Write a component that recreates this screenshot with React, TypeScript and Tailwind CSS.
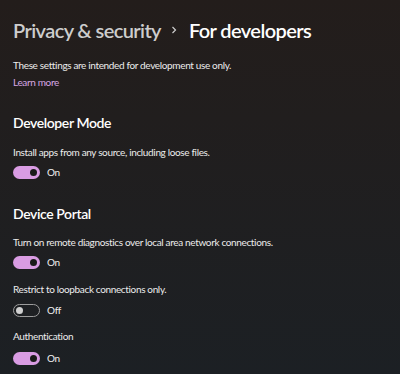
import React from "react";

interface ToggleRowProps {
	on: boolean;
	className?: string;
}

function ToggleRow({ on, className = "" }: ToggleRowProps) {
	return (
		<div className={`flex items-center h-[14px] ${className}`}>
			{on ? (
				<div className="w-[27px] h-[13px] rounded-full bg-[#d99ce3] flex items-center justify-end pr-[3px]">
					<div className="w-[7px] h-[7px] rounded-full bg-[#1a1a1a]" />
				</div>
			) : (
				<div className="w-[27px] h-[13px] rounded-full border border-[#9c9c9c] flex items-center pl-[2px]">
					<div className="w-[7px] h-[7px] rounded-full bg-[#d0d0d0]" />
				</div>
			)}
			<span className="ml-[7px] text-[10px] leading-[14px] tracking-[-0.3px] text-[#f0f0f0]">
				{on ? "On" : "Off"}
			</span>
		</div>
	);
}

const body = "text-[10px] leading-[14px] tracking-[-0.35px] text-[#ececec]";
const heading = "text-[14px] font-semibold leading-[20px] tracking-[-0.4px] text-white";

export default function App() {
	return (
		<div
			className="w-[400px] h-[374px] overflow-hidden bg-gradient-to-b from-[#231d1b] to-[#1c2024] pl-[13px] pt-[15px] text-white"
			style={{ fontFamily: 'Lato, "Open Sans", sans-serif' }}
		>
			<div className="flex items-center h-[30px] text-[20px] font-semibold leading-[30px] tracking-[-0.6px]">
				<span className="text-[#cdcdcd]">Privacy &amp; security</span>
				<svg className="ml-[9px] mr-[11px] w-[8px] h-[8px]" viewBox="0 0 8 8" fill="none">
					<path d="M2.5 1 L5.5 4 L2.5 7" stroke="#cdcdcd" strokeWidth="1.2" />
				</svg>
				<span className="text-white">For developers</span>
			</div>

			<p className={`mt-[13px] ${body}`}>
				These settings are intended for development use only.
			</p>
			<p className="mt-[3px] text-[10px] leading-[14px] tracking-[-0.35px] text-[#d6a7e4]">
				Learn more
			</p>

			<h2 className={`mt-[24px] ${heading}`}>Developer Mode</h2>
			<p className={`mt-[12px] ${body}`}>
				Install apps from any source, including loose files.
			</p>
			<ToggleRow on className="mt-[6px]" />

			<h2 className={`mt-[25px] ${heading}`}>Device Portal</h2>
			<p className={`mt-[11px] ${body}`}>
				Turn on remote diagnostics over local area network connections.
			</p>
			<ToggleRow on className="mt-[6px]" />
			<p className={`mt-[13px] ${body}`}>Restrict to loopback connections only.</p>
			<ToggleRow on={false} className="mt-[7px]" />
			<p className={`mt-[12px] ${body}`}>Authentication</p>
			<ToggleRow on className="mt-[8px]" />
		</div>
	);
}
